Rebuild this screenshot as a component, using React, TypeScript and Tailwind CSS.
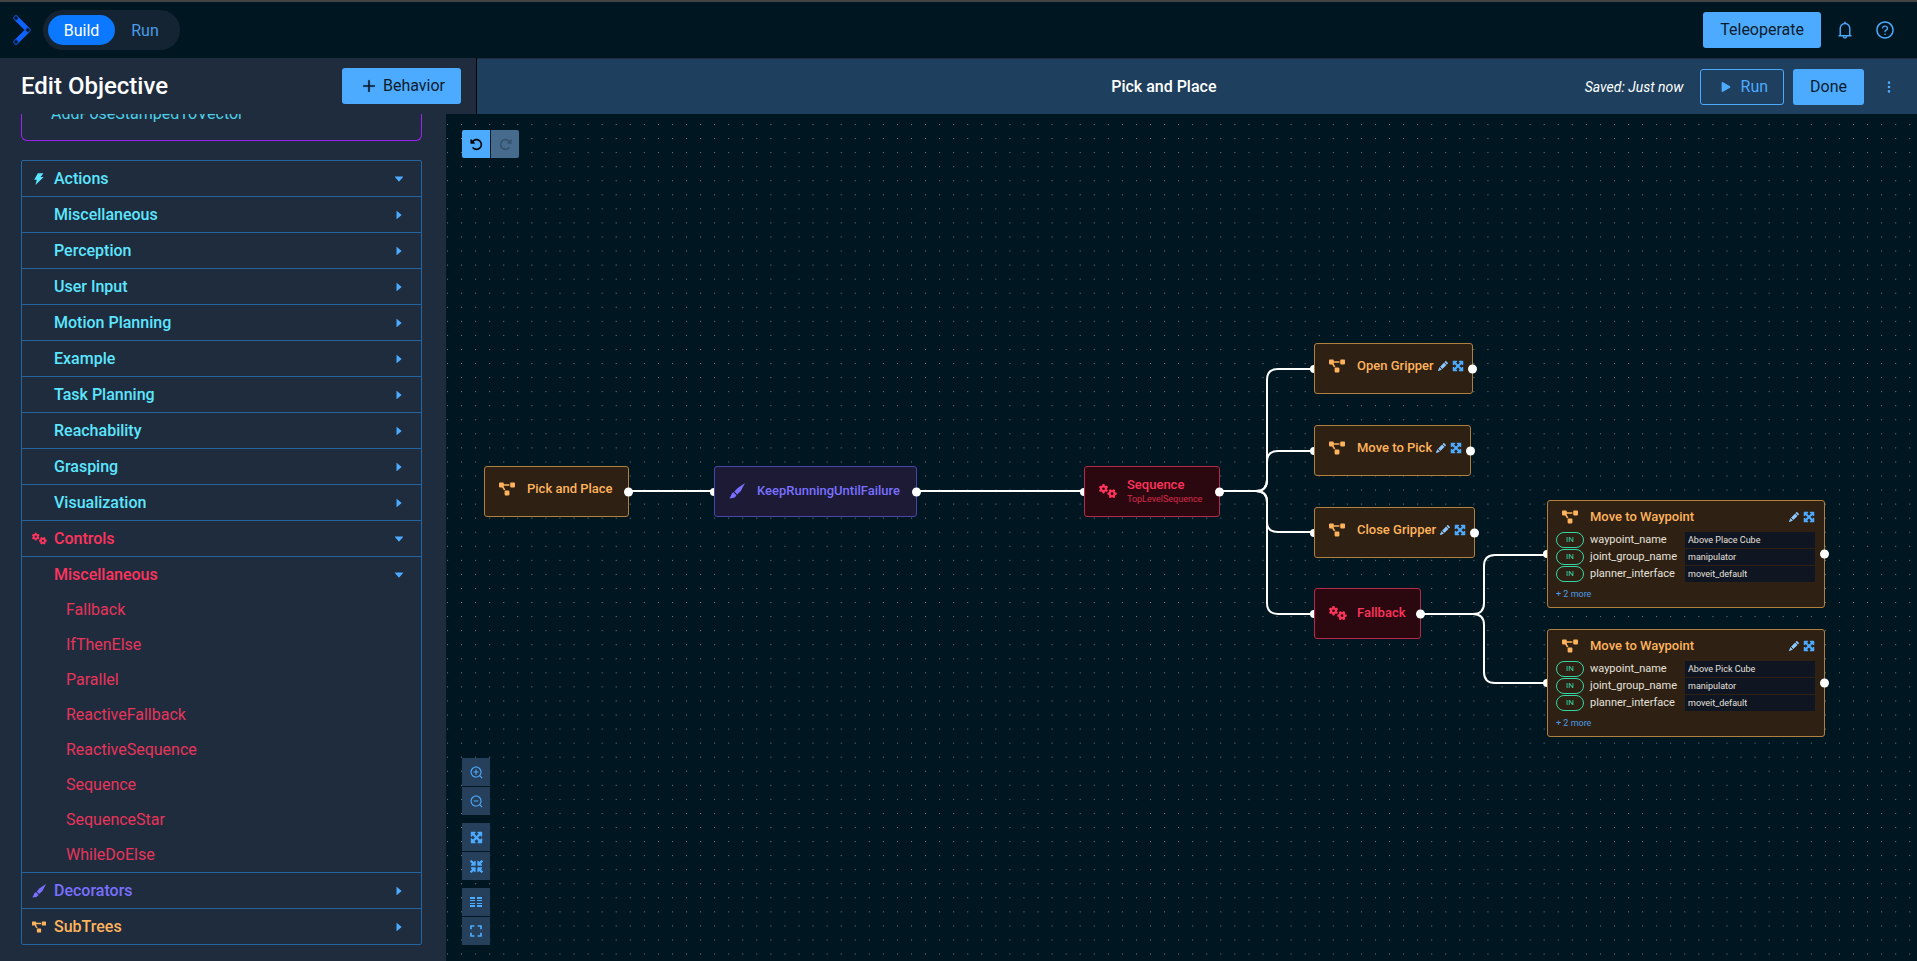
import { ReactNode } from 'react';
import {
  AiFillCaretDown,
  AiFillCaretRight,
  AiFillThunderbolt,
  AiOutlineBell,
  AiOutlinePlus,
  AiOutlineQuestionCircle,
  AiOutlineZoomIn,
  AiOutlineZoomOut,
} from 'react-icons/ai';
import { BsPencilFill, BsThreeDotsVertical } from 'react-icons/bs';
import { FaPlay, FaProjectDiagram } from 'react-icons/fa';
import { FaGears, FaMaximize, FaMinimize, FaRotateLeft, FaRotateRight } from 'react-icons/fa6';
import { MdFullscreen } from 'react-icons/md';

const ACTIONS = [
  'Miscellaneous',
  'Perception',
  'User Input',
  'Motion Planning',
  'Example',
  'Task Planning',
  'Reachability',
  'Grasping',
  'Visualization',
];

const CONTROLS = [
  'Fallback',
  'IfThenElse',
  'Parallel',
  'ReactiveFallback',
  'ReactiveSequence',
  'Sequence',
  'SequenceStar',
  'WhileDoElse',
];

const Logo = () => (
  <svg viewBox="0 0 20 32" className="h-8 w-5" fill="none">
    <path d="M4 4 L16 16 L4 28" stroke="#0f62fe" strokeWidth="5" strokeLinecap="round" strokeLinejoin="round" />
    <g fill="#001722" stroke="#0f4fd0">
      <circle cx="4" cy="4" r="2.2" />
      <circle cx="16" cy="16" r="2.2" />
      <circle cx="4" cy="28" r="2.2" />
    </g>
  </svg>
);

const Brush = ({ size }: { size: number }) => (
  <svg viewBox="0 0 15 15" width={size} height={size} fill="currentColor">
    <path d="M15 0 L8.2 4.6 L5 8 L7.6 10.8 L11 7.8 Z" />
    <path d="M4.2 8.6 L7 11.6 C6.4 14 3.4 14.4 0 14.4 C2 13.2 1.8 9.4 4.2 8.6 Z" />
  </svg>
);

const TopBar = () => (
  <header className="flex h-[58px] shrink-0 items-center border-t-2 border-[#444444] bg-[#001722] pr-[22px] pl-3">
    <a href="#home" aria-label="Home">
      <Logo />
    </a>
    <nav className="ml-[11px] flex h-10 items-center rounded-full bg-[#152432] p-[5px]">
      <button className="h-[30px] w-[67px] rounded-full bg-[#0a78ff] pt-[2px] text-base text-white">Build</button>
      <button className="h-[30px] w-[60px] pt-[2px] text-base text-[#4a9be8]">Run</button>
    </nav>
    <div className="ml-auto flex items-center text-[#4dabff]">
      <button className="h-9 rounded-[3px] bg-[#4dabff] px-[17px] text-base text-[#0b1b2b]">Teleoperate</button>
      <button aria-label="Notifications" className="ml-[14px]">
        <AiOutlineBell size={20} />
      </button>
      <button aria-label="Help" className="ml-5">
        <AiOutlineQuestionCircle size={20} />
      </button>
    </div>
  </header>
);

type RowProps = { label: string; icon?: ReactNode; open?: boolean; last?: boolean; color: string };

const Row = ({ label, icon, open, last, color }: RowProps) => (
  <button
    aria-expanded={!!open}
    className={`flex w-full items-center border-[#27639c] pr-4 pl-2 text-base font-medium ${last ? 'h-[35px]' : 'h-9 border-b'} ${color}`}
  >
    <span className="flex w-6 shrink-0 pl-[2px]">{icon}</span>
    {label}
    <span className="ml-auto text-[#4dabff]">
      {open ? <AiFillCaretDown size={12} /> : <AiFillCaretRight size={12} />}
    </span>
  </button>
);

const Sidebar = () => (
  <aside className="flex w-[446px] shrink-0 flex-col overflow-hidden bg-[#1e2c3e] pl-[21px] pr-6">
    <div className="flex h-[27px] shrink-0 items-end rounded-b-md border border-t-0 border-[#a020f0] px-[29px]">
      <span className="mb-4 text-base leading-5 text-[#4fcfe6]">AddPoseStampedToVector</span>
    </div>
    <div className="mt-[19px] rounded-xs border border-[#27639c]">
      <Row label="Actions" icon={<AiFillThunderbolt size={14} />} open color="text-[#5ce6ff]" />
      {ACTIONS.map((label) => (
        <Row key={label} label={label} color="text-[#5ce6ff]" />
      ))}
      <Row label="Controls" icon={<FaGears size={15} />} open color="text-[#ff335c]" />
      <Row label="Miscellaneous" open last color="text-[#ff335c]" />
      <ul className="border-b border-[#27639c] text-base text-[#e8345a]">
        {CONTROLS.map((label) => (
          <li key={label} className="flex h-[35px] items-center pl-11">
            {label}
          </li>
        ))}
      </ul>
      <Row label="Decorators" icon={<Brush size={14} />} color="text-[#7a70ff]" />
      <Row label="SubTrees" icon={<FaProjectDiagram size={14} />} last color="text-[#ffb35c]" />
    </div>
  </aside>
);

const EDGES = [
  'M183 377 H270',
  'M470 377 H639',
  'M774 377 H810 Q821 377 821 366 V266 Q821 255 832 255 H869',
  'M774 377 H810 Q821 377 821 366 V348 Q821 337 832 337 H869',
  'M774 377 H810 Q821 377 821 388 V408 Q821 418 832 418 H869',
  'M774 377 H810 Q821 377 821 388 V489 Q821 500 832 500 H869',
  'M975 500 H1027 Q1038 500 1038 489 V452 Q1038 441 1049 441 H1101',
  'M975 500 H1027 Q1038 500 1038 511 V558 Q1038 569 1049 569 H1101',
];

const NODE_KINDS = {
  subtree: 'border-[#b0803f] bg-[#2e2114] text-[#ffb35c]',
  control: 'border-[#b52a4a] bg-[#2b080f] text-[#ff335c]',
  decorator: 'border-[#4a45a8] bg-[#1c1a35] text-[#7a70ff]',
};

const NODE_ICONS = {
  subtree: <FaProjectDiagram size={16} />,
  control: <FaGears size={18} />,
  decorator: <Brush size={16} />,
};

type NodeProps = {
  kind: keyof typeof NODE_KINDS;
  title: string;
  subtitle?: string;
  place: string;
  root?: boolean;
  editable?: boolean;
};

const Ports = ({ root }: { root?: boolean }) => (
  <>
    {!root && <span className="absolute top-1/2 -left-[5px] h-2 w-1 -translate-y-1/2 rounded-l-full bg-white" />}
    <span className="absolute top-1/2 -right-[5px] size-[9px] -translate-y-1/2 rounded-full bg-white" />
  </>
);

const EditButtons = () => (
  <span className="flex items-center gap-1 text-[#4dabff]">
    <button aria-label="Edit" className="text-[#8cc8ff]">
      <BsPencilFill size={10} />
    </button>
    <button aria-label="Expand">
      <FaMaximize size={12} />
    </button>
  </span>
);

const TreeNode = ({ kind, title, subtitle, place, root, editable }: NodeProps) => (
  <div
    className={`absolute flex h-[51px] items-center rounded-[3px] border pl-[14px] ${NODE_KINDS[kind]} ${place} ${kind === 'subtree' ? 'pb-[5px]' : 'pb-px'}`}
  >
    <span className="w-7 shrink-0">{NODE_ICONS[kind]}</span>
    <span className="flex flex-col whitespace-nowrap">
      <span className="text-[13px] leading-4 font-medium">{title}</span>
      {subtitle && <span className="text-[9px] leading-3 opacity-80">{subtitle}</span>}
    </span>
    {editable && (
      <span className="ml-1">
        <EditButtons />
      </span>
    )}
    <Ports root={root} />
  </div>
);

const WaypointNode = ({ waypoint, place }: { waypoint: string; place: string }) => {
  const ports = [
    ['waypoint_name', waypoint],
    ['joint_group_name', 'manipulator'],
    ['planner_interface', 'moveit_default'],
  ];

  return (
    <div className={`absolute h-[108px] w-[278px] rounded-[3px] border pr-[9px] pl-2 ${NODE_KINDS.subtree} ${place}`}>
      <div className="flex h-[31px] items-center pl-[6px]">
        <span className="w-7 shrink-0">{NODE_ICONS.subtree}</span>
        <span className="text-[13px] leading-4 font-medium">Move to Waypoint</span>
        <span className="ml-auto">
          <EditButtons />
        </span>
      </div>
      {ports.map(([name, value]) => (
        <label key={name} className="mb-px flex h-4 items-center text-[11px] leading-4 text-[#e6e1dc]">
          <span className="mr-[6px] flex h-4 w-7 shrink-0 items-center justify-center rounded-full border border-[#36d6a4] text-[8px] text-[#36d6a4]">
            IN
          </span>
          <span className="w-[95px] shrink-0">{name}</span>
          <input defaultValue={value} className="h-4 w-full min-w-0 bg-[#101522] px-[3px] text-[9px]" />
        </label>
      ))}
      <button className="mt-1 block text-[9px] leading-4 text-[#4a9be8]">+ 2 more</button>
      <Ports />
    </div>
  );
};

const SplitLines = () => (
  <svg viewBox="0 0 12 10" className="h-[10px] w-3" fill="currentColor">
    <path d="M0 0h5v2H0zM7 0h5v2H7zM0 3h5v1H0zM7 3h5v1H7zM0 6h5v1H0zM7 6h5v1H7zM0 8h5v2H0zM7 8h5v2H7z" />
  </svg>
);

const TOOLS = [
  [
    { label: 'Zoom in', icon: <AiOutlineZoomIn size={15} /> },
    { label: 'Zoom out', icon: <AiOutlineZoomOut size={15} /> },
  ],
  [
    { label: 'Expand all', icon: <FaMaximize size={13} /> },
    { label: 'Collapse all', icon: <FaMinimize size={13} /> },
  ],
  [
    { label: 'Toggle layout', icon: <SplitLines /> },
    { label: 'Fit to screen', icon: <MdFullscreen size={20} /> },
  ],
];

const Canvas = () => (
  <main className="relative min-w-0 flex-1 overflow-hidden bg-[#001722]">
    <svg className="absolute inset-0 size-full" fill="none" stroke="white" strokeWidth="2">
      <defs>
        <pattern id="dots" x="1" y="10" width="14.06" height="14.06" patternUnits="userSpaceOnUse">
          <rect width="1" height="1" fill="#71808a" stroke="none" />
        </pattern>
      </defs>
      <rect width="100%" height="100%" fill="url(#dots)" stroke="none" />
      {EDGES.map((d) => (
        <path key={d} d={d} />
      ))}
    </svg>
    <TreeNode kind="subtree" title="Pick and Place" root place="top-[352px] left-[38px] w-[145px]" />
    <TreeNode kind="decorator" title="KeepRunningUntilFailure" place="top-[352px] left-[268px] w-[203px]" />
    <TreeNode kind="control" title="Sequence" subtitle="TopLevelSequence" place="top-[352px] left-[638px] w-[136px]" />
    <TreeNode kind="subtree" title="Open Gripper" editable place="top-[229px] left-[868px] w-[159px]" />
    <TreeNode kind="subtree" title="Move to Pick" editable place="top-[311px] left-[868px] w-[157px]" />
    <TreeNode kind="subtree" title="Close Gripper" editable place="top-[393px] left-[868px] w-[161px]" />
    <TreeNode kind="control" title="Fallback" place="top-[474px] left-[868px] w-[107px]" />
    <WaypointNode waypoint="Above Place Cube" place="top-[386px] left-[1101px]" />
    <WaypointNode waypoint="Above Pick Cube" place="top-[515px] left-[1101px]" />

    <div className="absolute top-4 left-4 flex gap-px">
      <button aria-label="Undo" className="flex size-7 items-center justify-center rounded-l-xs bg-[#4dabff] text-black">
        <FaRotateLeft size={13} />
      </button>
      <button
        aria-label="Redo"
        disabled
        className="flex size-7 items-center justify-center rounded-r-xs bg-[#476b8d] text-[#35526e]"
      >
        <FaRotateRight size={13} />
      </button>
    </div>
    <div className="absolute bottom-4 left-4 flex flex-col gap-2">
      {TOOLS.map((group) => (
        <div key={group[0].label} className="flex flex-col gap-px">
          {group.map(({ label, icon }) => (
            <button
              key={label}
              aria-label={label}
              className="flex size-7 items-center justify-center bg-[#263f5a] text-[#4dabff]"
            >
              {icon}
            </button>
          ))}
        </div>
      ))}
    </div>
  </main>
);

export default function App() {
  return (
    <div className="flex h-screen flex-col overflow-hidden bg-[#001722] font-[Roboto,sans-serif] text-white">
      <TopBar />
      <div className="flex h-14 shrink-0">
        <div className="flex w-[477px] shrink-0 items-center justify-between border-r border-black bg-[#1e2c3e] pr-[15px] pl-[21px]">
          <h1 className="text-2xl font-medium">Edit Objective</h1>
          <button className="flex h-9 items-center gap-[6px] rounded-[3px] bg-[#4dabff] pr-4 pl-[19px] text-base text-[#0b1b2b]">
            <AiOutlinePlus size={16} strokeWidth={40} />
            Behavior
          </button>
        </div>
        <div className="grid min-w-0 flex-1 grid-cols-[28fr_auto_30fr] items-center border-t border-[#1e2c3e] bg-[#1e3f5e] pr-[21px]">
          <h2 className="col-start-2 text-base font-medium">Pick and Place</h2>
          <div className="flex items-center justify-end">
            <span className="text-sm italic">Saved: Just now</span>
            <button className="ml-4 flex h-9 items-center gap-[10px] rounded-[3px] border border-[#4dabff] pr-[15px] pl-5 text-base text-[#4dabff]">
              <FaPlay size={10} />
              Run
            </button>
            <button className="ml-[9px] h-9 rounded-[3px] bg-[#4dabff] px-[17px] text-base text-[#0b1b2b]">Done</button>
            <button aria-label="More" className="ml-[18px] text-[#4dabff]">
              <BsThreeDotsVertical size={14} />
            </button>
          </div>
        </div>
      </div>
      <div className="flex min-h-0 flex-1">
        <Sidebar />
        <Canvas />
      </div>
    </div>
  );
}
